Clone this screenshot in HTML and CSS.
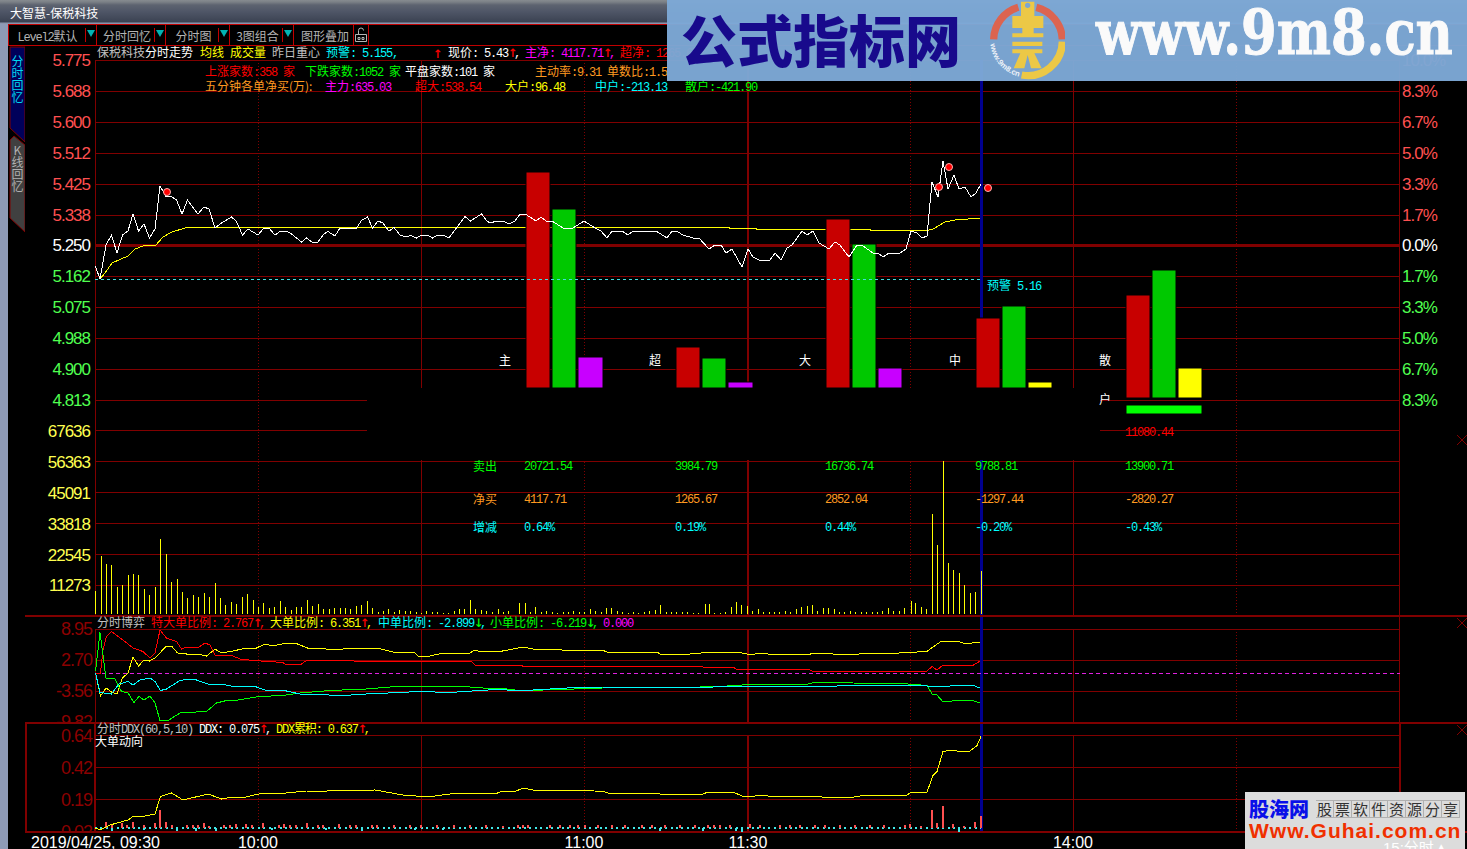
FILE: index.html
```html
<!DOCTYPE html>
<html lang="zh-CN">
<head>
    <meta charset="UTF-8">
    <title>大智慧-保税科技</title>
    <link rel="stylesheet" href="styles.css">
</head>
<body>
    <div class="titlebar">大智慧-保税科技</div>

    <div class="app">
        <div class="sidebar"></div>
        <div class="workspace">
            <div class="toolbar">
                <div class="tool tool-level"><span class="tool-label"><span class="n">Level2</span>默认</span><span class="tool-arrow"></span></div>
                <div class="tool tool-recall"><span class="tool-label">分时回忆</span><span class="tool-arrow"></span></div>
                <div class="tool tool-chart"><span class="tool-label">分时图</span><span class="tool-arrow"></span></div>
                <div class="tool tool-combo"><span class="tool-label">3图组合</span><span class="tool-arrow"></span></div>
                <div class="tool tool-overlay"><span class="tool-label">图形叠加</span></div>
                <div class="tool tool-lock">
                    <svg width="14" height="16" viewBox="0 0 14 16"><path class="lock" d="M4.5 7.5V3.5a2.5 2.5 0 0 1 5 0M1.5 7.5h11v7h-11zM4 10.5h2v2H4zM8 10.5h2v2H8z"/></svg>
                </div>
            </div>

            <!-- 主图 -->
            <div class="panel panel-main">
                <svg class="sidetabs" width="17" height="190" viewBox="8 46 17 190">
                    <polygon class="tab-on" points="10,47 25,47 25,142 10,128"/>
                    <polygon class="tab-off" points="10,140 14,136 25,145 25,232 10,218"/>
                    <text class="tab-text tab-text-on" x="17.5" y="55">分时回忆</text>
                    <text class="tab-text tab-text-off" x="17.5" y="144">K线回忆</text>
                </svg>
                <ul class="axis axis-main">
                    <li class="up">5.775</li><li class="up">5.688</li><li class="up">5.600</li><li class="up">5.512</li><li class="up">5.425</li><li class="up">5.338</li>
                    <li class="flat">5.250</li>
                    <li class="down">5.162</li><li class="down">5.075</li><li class="down">4.988</li><li class="down">4.900</li><li class="down">4.813</li>
                    <li class="vol">67636</li><li class="vol">56363</li><li class="vol">45091</li><li class="vol">33818</li><li class="vol">22545</li><li class="vol">11273</li>
                </ul>
                <svg class="plot" width="1305" height="569" viewBox="95 46 1305 569">
                    <path class="grid" d="M95 60.5H1400M95 91.5H1400M95 122.5H1400M95 153.5H1400M95 184.5H1400M95 215.5H1400M95 276.5H1400M95 307.5H1400M95 338.5H1400M95 369.5H1400M95 400.5H1400M95 430.5H1400M95 461.5H1400M95 492.5H1400M95 523.5H1400M95 554.5H1400M95 585.5H1400"/>
                    <path class="grid" d="M95.5 60V615M421.5 60V615M1073.5 60V615M1399.5 60V615"/>
                    <path class="grid-dot" d="M258.5 60V615M584.5 60V615M910.5 60V615M1236.5 60V615"/>
                    <path class="grid-mid" d="M95 245.5H1400"/>
                    <path class="grid-wide" d="M748 60V615"/>
                    <path class="cursor" d="M981.5 60V615"/>

                    <polyline class="avg" points="100,279 105,273 112,263 128,256 135,249 143,246 156,245 163,237 172,232 185,228 207,227 293,227 294,227.5 729,227.5 730,228.5 756,228.5 757,229.5 870,229.5 871,230.5 927,230.5 933,229 945,222 957,219.5 980,218.5"/>

                    <!-- 资金柱 -->
                    <g class="bars">
                        <rect class="bar-buy" x="526" y="172" width="24" height="216"/><rect class="bar-sell" x="552" y="209" width="24" height="179"/><rect class="bar-purple" x="578" y="357" width="25" height="31"/>
                        <rect class="bar-buy" x="676" y="347" width="24" height="41"/><rect class="bar-sell" x="702" y="358" width="24" height="30"/><rect class="bar-purple" x="728" y="382" width="25" height="6"/>
                        <rect class="bar-buy" x="826" y="219" width="24" height="169"/><rect class="bar-sell" x="852" y="244" width="24" height="144"/><rect class="bar-purple" x="878" y="368" width="24" height="20"/>
                        <rect class="bar-buy" x="976" y="318" width="24" height="70"/><rect class="bar-sell" x="1002" y="306" width="24" height="82"/><rect class="bar-yellow" x="1028" y="382" width="24" height="6"/>
                        <rect class="bar-buy" x="1126" y="295" width="24" height="103"/><rect class="bar-sell" x="1152" y="270" width="24" height="128"/><rect class="bar-yellow" x="1178" y="368" width="24" height="30"/>
                        <rect class="bar-net" x="1126" y="405" width="76" height="9"/>
                    </g>

                    <path class="warn-line" d="M95 279.5H981"/>
                    <polyline class="price" points="95.5,266.5 100,279 106,245 111.5,235 117,253 122.5,235 128,231 133,214 138.5,231 144,224 149.5,238 155,229 160,186 166,196.5 171.5,196.5 176.5,200 182,214 187.5,200 198,214 204,207 209,209 215,228 220,224 231.5,217 236.5,221.5 242.5,235 248,229 258,235 264,228 269,228 275,235 280.5,231 286,231 291.5,234 301.5,242 306.5,238 312,242 318,242 324,234 328,231.5 335,236 340,228 356.5,228 361.5,220.5 367.5,217 372.5,228 378,221 383,223 389,231 394,227.5 400,235 406,237 410.5,235.5 416.5,238 421.5,235 427.5,235 432.5,238 438,235 443,235 449,238 465,216.5 470.5,221 481.5,214 487,221 490,223 497,221 503,221 509,224 515,221 520,214 525,214 530,217 536,221 541,217 546,221 552,221 563,228 573,228 584,221 595,228 601,231 607,238 612,231 622,231 628,235 633,231 656,231 667,238 672,231 678,232 683,235 693,238 699,238 709,249 715,245 721,245 726,253 732,249 742,267 748,249 753,257 759,260 770,260 775,253 781,260 787,248 792,245 802,231 807,235 813,231 819,243 829,249 835,242 840,245 849,257 857,245 863,246 873,253 878,253 883,257 889,253 900,253 906,249 911,231 917,233 922,238 927,236 932,182 938,197 943,161 948,189 954,175 959,189 965,187 971,197 976,193 981,184"/>
                    <circle class="dot" cx="167" cy="192" r="3.5"/>
                    <circle class="dot" cx="949" cy="167" r="3.5"/>
                    <circle class="dot" cx="939" cy="187" r="3.5"/>
                    <circle class="dot" cx="988" cy="188" r="3.5"/>

                    <path class="vol-bars" d="M95.5 591V614M101.5 556V614M106.5 564V614M111.5 565V614M117.5 587V614M122.5 585V614M128.5 575V614M133.5 574V614M138.5 575V614M144.5 589V614M149.5 595V614M155.5 587V614M160.5 539V614M166.5 554V614M171.5 582V614M177.5 579V614M182.5 592V614M187.5 598V614M193.5 595V614M198.5 597V614M204.5 593V614M209.5 597V614M215.5 583V614M220.5 598V614M225.5 605V614M231.5 602V614M236.5 604V614M242.5 597V614M247.5 594V614M253.5 600V614M258.5 607V614M263.5 603V614M269.5 608V614M274.5 607V614M280.5 601V614M285.5 607V614M291.5 610V614M296.5 607V614M301.5 607V614M307.5 600V614M312.5 606V614M318.5 604V614M323.5 609V614M329.5 609V614M334.5 608V614M340.5 608V614M345.5 608V614M350.5 609V614M356.5 606V614M361.5 605V614M367.5 601V614M372.5 608V614M378.5 612V614M383.5 611V614M388.5 609V614M394.5 612V614M399.5 610V614M405.5 611V614M410.5 611V614M416.5 612V614M421.5 613V614M426.5 611V614M432.5 612V614M437.5 612V614M443.5 613V614M448.5 613V614M454.5 611V614M459.5 609V614M464.5 609V614M470.5 600V614M475.5 609V614M481.5 610V614M486.5 611V614M492.5 612V614M498.5 609V614M503.5 612V614M508.5 611V614M519.5 603V614M525.5 603V614M530.5 612V614M535.5 607V614M541.5 612V614M546.5 611V614M552.5 612V614M557.5 613V614M563.5 612V614M568.5 612V614M573.5 611V614M579.5 612V614M584.5 612V614M590.5 609V614M595.5 611V614M601.5 612V614M606.5 608V614M611.5 608V614M617.5 611V614M622.5 612V614M628.5 613V614M633.5 612V614M638.5 613V614M644.5 612V614M649.5 611V614M655.5 610V614M660.5 605V614M666.5 612V614M671.5 612V614M676.5 612V614M682.5 612V614M687.5 612V614M693.5 613V614M698.5 613V614M705.5 604V614M709.5 604V614M714.5 613V614M720.5 613V614M725.5 612V614M731.5 607V614M736.5 602V614M741.5 605V614M747.5 606V614M752.5 611V614M758.5 609V614M763.5 612V614M769.5 612V614M774.5 612V614M779.5 612V614M785.5 611V614M790.5 612V614M796.5 609V614M801.5 607V614M807.5 606V614M812.5 605V614M817.5 611V614M823.5 608V614M828.5 608V614M834.5 609V614M839.5 612V614M844.5 612V614M850.5 611V614M855.5 612V614M861.5 612V614M866.5 612V614M872.5 612V614M877.5 612V614M882.5 611V614M888.5 608V614M893.5 611V614M899.5 611V614M904.5 608V614M911.5 601V614M915.5 603V614M921.5 607V614M926.5 609V614M932.5 514V614M937.5 545V614M943.5 461V614M948.5 563V614M953.5 570V614M959.5 573V614M964.5 585V614M970.5 593V614M975.5 592V614M981.5 571V614"/>

                    <rect class="popup" x="367" y="388" width="733" height="72"/>

                    <text class="t white" x="499" y="365">主</text>
                    <text class="t white" x="649" y="365">超</text>
                    <text class="t white" x="799" y="365">大</text>
                    <text class="t white" x="949" y="365">中</text>
                    <text class="t white" x="1099" y="365">散</text>
                    <text class="t white" x="1099" y="404">户</text>
                    <text class="t cyan" x="987" y="290">预警<tspan class="n" dx="6">5.16</tspan></text>

                    <!-- 资金表 -->
                    <text class="n red" x="1125" y="436">11080.44</text>
                    <g class="green">
                        <text class="t" x="473" y="471">卖出</text>
                        <text class="n" x="524" y="470">20721.54</text><text class="n" x="675" y="470">3984.79</text><text class="n" x="825" y="470">16736.74</text><text class="n" x="975" y="470">9788.81</text><text class="n" x="1125" y="470">13900.71</text>
                    </g>
                    <g class="orange">
                        <text class="t" x="473" y="504">净买</text>
                        <text class="n" x="524" y="503">4117.71</text><text class="n" x="675" y="503">1265.67</text><text class="n" x="825" y="503">2852.04</text><text class="n" x="975" y="503">-1297.44</text><text class="n" x="1125" y="503">-2820.27</text>
                    </g>
                    <g class="cyan">
                        <text class="t" x="473" y="532">增减</text>
                        <text class="n" x="524" y="531">0.64%</text><text class="n" x="675" y="531">0.19%</text><text class="n" x="825" y="531">0.44%</text><text class="n" x="975" y="531">-0.20%</text><text class="n" x="1125" y="531">-0.43%</text>
                    </g>

                    <!-- 图头 -->
                    <text class="t grey" x="97" y="57">保税科技<tspan class="white">分时走势</tspan></text>
                    <text class="t yellow" x="200" y="57">均线</text>
                    <text class="t yellow" x="230" y="57">成交量</text>
                    <text class="t grey" x="272" y="57">昨日重心</text>
                    <text class="t cyan" x="326" y="57">预警<tspan class="n">: 5.155,</tspan></text>
                    <text class="a red" x="433" y="58">↑</text>
                    <text class="t white" x="448" y="57">现价<tspan class="n">: 5.43</tspan><tspan class="a red">↑</tspan><tspan class="n">,</tspan></text>
                    <text class="t magenta" x="525" y="57">主净<tspan class="n">: 4117.71</tspan><tspan class="a red">↑</tspan><tspan class="n">,</tspan></text>
                    <text class="t red" x="620" y="57">超净<tspan class="n">: 1265.67</tspan><tspan class="a">↑</tspan><tspan class="n">,</tspan></text>

                    <text class="t red" x="205" y="76">上涨家数<tspan class="n">:358</tspan></text>
                    <text class="t red" x="283" y="76">家</text>
                    <text class="t green" x="305" y="76">下跌家数<tspan class="n">:1052</tspan></text>
                    <text class="t green" x="389" y="76">家</text>
                    <text class="t white" x="405" y="76">平盘家数<tspan class="n">:101</tspan></text>
                    <text class="t white" x="483" y="76">家</text>
                    <text class="t orange" x="535" y="76">主动率<tspan class="n">:9.31</tspan></text>
                    <text class="t orange" x="607" y="76">单数比<tspan class="n">:1.5</tspan></text>

                    <text class="t orange" x="205" y="91">五分钟各单净买(万):</text>
                    <text class="t magenta" x="325" y="91">主力<tspan class="n">:635.03</tspan></text>
                    <text class="t red" x="415" y="91">超大<tspan class="n">:538.54</tspan></text>
                    <text class="t yellow" x="505" y="91">大户<tspan class="n">:96.48</tspan></text>
                    <text class="t cyan" x="595" y="91">中户<tspan class="n">:-213.13</tspan></text>
                    <text class="t green" x="685" y="91">散户<tspan class="n">:-421.90</tspan></text>
                </svg>
                <div class="side-right">
                    <ul class="axis axis-pct">
                        <li class="up">10.0%</li><li class="up">8.3%</li><li class="up">6.7%</li><li class="up">5.0%</li><li class="up">3.3%</li><li class="up">1.7%</li>
                        <li class="flat">0.0%</li>
                        <li class="down">1.7%</li><li class="down">3.3%</li><li class="down">5.0%</li><li class="down">6.7%</li><li class="down">8.3%</li>
                    </ul>
                    <svg class="close close-main" width="10" height="10" viewBox="0 0 10 10"><path d="M0 0L10 10M10 0L0 10"/></svg>
                </div>
            </div>

            <!-- 分时博弈 -->
            <div class="panel panel-sub">
                <ul class="axis axis-sub">
                    <li>8.95</li><li>2.70</li><li>-3.56</li><li>-9.82</li>
                </ul>
                <svg class="plot" width="1305" height="105" viewBox="95 617 1305 105">
                    <path class="grid" d="M95 629.5H1400M95 660.5H1400M95 691.5H1400"/>
                    <path class="grid" d="M95.5 629V722M421.5 629V722M1073.5 629V722M1399.5 617V722"/>
                    <path class="grid-dot" d="M258.5 629V722M584.5 629V722M910.5 629V722M1236.5 629V722"/>
                    <path class="grid-wide" d="M748 629V722"/>
                    <path class="cursor" d="M981.5 617V722"/>
                    <path class="zero-line" d="M95 673.5H1400"/>
                    <polyline class="line-yellow" points="95.5,673 100.5,696 106,688 111.5,692 117,694 122.5,678 128,673 133,657 138.5,666 144,660 149.5,661 155,658 166.5,646 171.5,646 177.5,653 186.5,654 198,654 206.5,656 215,649 221.5,653 233,651 246.5,648 256.5,648 265,644 273,646 286.5,643 295,643 310,649 318,648 333,650 353,648 376.5,648 393,652 415,653 418,656 430,656 443,653 470,653 475,650 480,651.5 500,651.5 513,649 523,647 533,649 560,649 562,650 602,650 608,652.5 658,652.5 660,654 690,654 707,652.5 740,652.5 747,654 755,654 762,653.5 780,655 787,654 805,654 808,655 813,653 827,653 833,654 850,655 863,653.5 882,654 908,652.5 927,651.5 933,647 941,641.5 957,641 963,643 972,643 980,642"/>
                    <polyline class="line-red" points="95.5,673 100.5,673 103,650 106.5,636.5 111.5,631.5 123,640 133,648 143,651.5 150,658 155,653 160,630 166.5,638 176.5,641.5 181.5,649 186.5,647 199,647 205,643 210,645 215,655 233,656 240,659 253,660.5 283,662.5 285,664 301.5,664 306.5,660.5 353,660.5 355,661.5 471.5,661.5 475,665 522,665 523,666.5 702,666.5 703,667 733,667 736,669 808,669 812,671 927,671 932,666.5 937,670 943,665 957,665.5 972,666 980,661"/>
                    <polyline class="line-green" points="95.5,671.5 100,632.5 106,678 115,679 121.5,691.5 128,693 134,702.5 139,696.5 144,700 150,696 155,703 160,720.5 168,720.5 180,713 185,712.5 206.5,711.5 216.5,703 226.5,700.5 238,700 256.5,697 286.5,695 300,693 330,690.5 366.5,689 396.5,686.5 463,686.5 490,688.5 507,689 523,691 543,690 560,689.5 602,688 700,687 740,685.5 747,684 808,684 812,683 848,682.5 853,683 908,684 927,685.5 932,694 937,695 943,702 957,700.5 972,700.5 980,703"/>
                    <polyline class="line-cyan" points="95.5,673 100,692.5 111.5,694 119,684 128,681.5 133,685 140,680 150,678 155,681.5 160.5,690.5 166.5,689 180,680.5 188,679 196.5,680 208,684 221.5,684 233,686.5 256.5,687 266.5,690.5 286.5,691 300,694 343,695.5 366.5,694 420,691.5 450,692.5 480,690.5 497,689.5 517,690.5 533,690 567,688 603,687 657,687 700,687.5 740,686 837,686 853,685 908,685 927,686 943,687 957,685 972,685 980,688"/>
                    <text class="t grey" x="97" y="627">分时博弈</text>
                    <text class="t red" x="151" y="627">特大单比例<tspan class="n">: 2.767</tspan><tspan class="a">↑</tspan><tspan class="n">,</tspan></text>
                    <text class="t yellow" x="270" y="627">大单比例<tspan class="n">: 6.351</tspan><tspan class="a red">↑</tspan><tspan class="n">,</tspan></text>
                    <text class="t cyan" x="378" y="627">中单比例<tspan class="n">: -2.899</tspan><tspan class="a green">↓</tspan><tspan class="n">,</tspan></text>
                    <text class="t green" x="490" y="627">小单比例<tspan class="n">: -6.219</tspan><tspan class="a">↓</tspan><tspan class="n">,</tspan></text>
                    <text class="n magenta" x="603" y="627">0.000</text>
                </svg>
                <div class="side-right">
                    <svg class="close close-sub" width="10" height="10" viewBox="0 0 10 10"><path d="M0 0L10 10M10 0L0 10"/></svg>
                </div>
            </div>

            <!-- DDX -->
            <div class="panel panel-ddx">
                <ul class="axis axis-ddx">
                    <li>0.64</li><li>0.42</li><li>0.19</li><li>-0.02</li>
                </ul>
                <svg class="plot" width="1305" height="107" viewBox="95 724 1305 107">
                    <path class="grid" d="M95 735.5H1400M95 767.5H1400M95 799.5H1400"/>
                    <path class="grid" d="M421.5 735V831M1073.5 735V831"/>
                    <path class="grid-side" d="M95 724V831M1399.5 724V831"/>
                    <path class="grid-dot" d="M258.5 735V831M584.5 735V831M910.5 735V831M1236.5 735V831"/>
                    <path class="grid-wide" d="M748 735V831"/>
                    <path class="cursor" d="M981.5 724V831"/>
                    <path class="ddx-base" d="M95 828H981"/>
                    <path class="ddx-down" d="M112 828V831M144 828V830M177 828V831M196 828V831M216 828V831M272 828V830M326 828V830M362 828V831M415 828V830M443 828V830M660 828V831M703 828V831M736 828V831M742 828V832M959 828V832"/>
                    <path class="ddx-up" d="M106 822V828M112 825V828M122 823V828M127 825V828M133 822V828M144 825V828M155 823V828M160 810V828M166 822V828M172 825V828M187 825V828M193 825V828M198 825V828M204 823V828M209 826V828M224 825V828M230 825V828M236 824V828M246 824V828M252 825V828M263 823V828M279 825V828M284 824V828M290 825V828M296 825V828M307 823V828M318 825V828M323 825V828M339 824V828M350 825V828M356 825V828M372 825V828M377 825V828M394 825V828M410 825V828M421 825V828M437 825V828M454 825V828M470 825V828M486 825V828M503 826V828M518 825V828M523 825V828M528 825V828M550 825V828M560 825V828M570 825V828M578 825V828M585 825V828M598 825V828M612 825V828M625 825V828M642 825V828M652 825V828M665 825V828M680 825V828M695 825V828M708 825V828M714 825V828M720 825V828M730 825V828M750 824V828M760 825V828M780 825V828M790 825V828M800 825V828M815 825V828M825 825V828M840 825V828M855 825V828M870 825V828M884 825V828M905 825V828M910 824V828M921 826V828M932 810V828M937 823V828M943 806V828M953 824V828M964 826V828M975 822V828M981 816V828"/>
                    <polyline class="line-yellow" points="95.5,828 100,830 110,825 128,820 133,816.5 140,817 155,814 160.5,796.5 171.5,793 183,800 208,794 221.5,799 233,797 241.5,798 263,793 276.5,794 306.5,791 326.5,791 353,790.5 375,790 403,795 423,796.5 435,796 450,794 480,793 495,794 500,792 515,791.5 523,788 533,790 577,790 603,791.5 610,793.5 657,793.5 660,794 703,794 708,792 733,792 742,796 755,796 758,795 778,797 788,796 815,796 822,797 833,797 848,798 860,796 872,795 907,795 912,792 927,792 933,775.5 937,771.5 943,751.5 953,750 959,751.5 970,751 977,745.5 981,736.5"/>
                    <text class="t grey" x="97" y="733">分时<tspan class="n">DDX(60,5,10)</tspan></text>
                    <text class="n white" x="199" y="733">DDX: 0.075<tspan class="a red">↑</tspan>,</text>
                    <text class="n yellow" x="276" y="733">DDX<tspan class="t">累积</tspan>: 0.637<tspan class="a red">↑</tspan>,</text>
                    <text class="t white" x="95" y="746">大单动向</text>
                </svg>
                <div class="side-right">
                    <svg class="close close-ddx" width="10" height="10" viewBox="0 0 10 10"><path d="M0 0L10 10M10 0L0 10"/></svg>
                </div>
            </div>

            <svg class="timeaxis" width="1459" height="16" viewBox="8 833 1459 16">
                <text x="31" y="848">2019/04/25, 09:30</text>
                <text class="mid" x="258" y="848">10:00</text>
                <text class="mid" x="584" y="848">11:00</text>
                <text class="mid" x="748" y="848">11:30</text>
                <text class="mid" x="1073" y="848">14:00</text>
            </svg>
        </div>
    </div>

    <!-- 水印 -->
    <div class="wm-top">
        <div class="wm-name">公式指标网</div>
        <svg class="wm-logo" width="80" height="81" viewBox="0 0 240 243">
            <defs><path id="logoArc" d="M16 132A112 112 0 0 0 122 232"/></defs>
            <path class="ring-red" d="M26 118A103 103 0 0 1 100 22"/>
            <path class="ring-red" d="M154 22A103 103 0 0 1 232 118"/>
            <path class="ring-yellow" d="M232 125A103 103 0 0 1 110 225"/>
            <path class="coin" fill-rule="evenodd" d="M108 5H148V48H175V84H146V100H175V112H82V100H112V84H82V48H108ZM120 16a8 8 0 1 0 16 0a8 8 0 1 0-16 0Z"/>
            <path class="coin" fill-rule="evenodd" d="M82 125H172V138H82ZM82 148H172V160H148L170 205H138L128 165L118 205H86L106 160H82Z"/>
            <text class="logo-text"><textPath href="#logoArc">www.9m8.cn</textPath></text>
        </svg>
        <div class="wm-url">www.9m8.cn</div>
    </div>

    <div class="wm-bottom">
        <div class="wm-row">
            <span class="wm-guhai">股海网</span>
            <span class="wm-cells"><span>股</span><span>票</span><span>软</span><span>件</span><span>资</span><span>源</span><span>分</span><span>享</span></span>
        </div>
        <div class="wm-site">Www.Guhai.com.cn</div>
        <div class="wm-corner">15:分时▲</div>
    </div>
</body>
</html>
```

FILE: styles.css
```css
* {
    box-sizing: border-box;
}
html, body {
    margin: 0;
    height: 100%;
    overflow: hidden;
}
body {
    background: #000;
    font-family: "Noto Sans CJK SC", sans-serif;
    color: #fff;
    width: 1467px;
    height: 849px;
    position: relative;
}
ul {
    list-style: none;
    margin: 0;
    padding: 0;
}
svg {
    display: block;
}

/* title bar */
.titlebar {
    height: 24px;
    padding: 6px 0 0 10px;
    font-size: 12px;
    line-height: 14px;
    color: #fff;
    background: linear-gradient(#868b90 0, #7b8086 2px, #5d6370 5px, #4e5566 12px, #434a5a 18px, #3a4152 22px, #8b95ad 23px);
}
.app {
    display: flex;
    height: 825px;
}
.sidebar {
    width: 8px;
    background: #8e9ab6;
}
.workspace {
    width: 1459px;
    display: flex;
    flex-direction: column;
}

/* toolbar */
.toolbar {
    display: flex;
    height: 22px;
    border-top: 1px solid #c00000;
    border-bottom: 1px solid #c00000;
    border-left: 1px solid #c00000;
    color: #b4b4b4;
    font-size: 12px;
    line-height: 22px;
}
.tool {
    display: flex;
    border-right: 1px solid #c00000;
}
.tool-level { width: 88px; }
.tool-recall { width: 69px; }
.tool-chart { width: 64px; }
.tool-combo { width: 64px; }
.tool-overlay { width: 60px; }
.tool-lock {
    width: 15px;
    align-items: center;
    justify-content: center;
}
.tool-label {
    flex: 1;
    padding-left: 3px;
    text-align: center;
    white-space: nowrap;
}
.tool-level .tool-label {
    padding-left: 1px;
}
.tool-arrow {
    width: 11px;
    height: 14px;
    margin-top: 3px;
    border-left: 1px solid #c00000;
    position: relative;
}
.tool-arrow::after {
    content: "";
    position: absolute;
    left: 1px;
    top: 2px;
    border-left: 4px solid transparent;
    border-right: 4px solid transparent;
    border-top: 7px solid #00b4b4;
}
.lock {
    fill: none;
    stroke: #b4b4b4;
    stroke-width: 1;
}

/* panels */
.panel {
    display: flex;
}
.panel-main {
    height: 569px;
}
.panel-sub {
    height: 107px;
    margin-left: 17px;
    border-top: 2px solid #800000;
}
.panel-ddx {
    height: 111px;
    margin-left: 17px;
    border-top: 2px solid #800000;
    border-bottom: 2px solid #800000;
    border-left: 2px solid #800000;
}
.plot {
    flex: none;
    overflow: visible;
}
.side-right {
    flex: 1;
    position: relative;
}

/* vertical tabs */
.sidetabs {
    flex: none;
}
.tab-on {
    fill: #00005a;
    stroke: #800000;
}
.tab-off {
    fill: #404040;
    stroke: #800000;
}
.tab-text {
    font-size: 12px;
    writing-mode: vertical-rl;
    text-orientation: upright;
    text-anchor: start;
}
.tab-text-on {
    fill: #00d8f0;
}
.tab-text-off {
    fill: #b0b0b0;
}

/* axis labels */
.axis {
    font-family: "Liberation Sans", sans-serif;
    font-size: 17px;
    letter-spacing: -1px;
}
.axis-main {
    width: 70px;
    flex: none;
    height: 569px;
    padding-right: 5px;
    text-align: right;
}
.axis-main li, .axis-pct li {
    height: 30.92px;
    line-height: 30.92px;
}
.axis-pct {
    padding-left: 2px;
}
.axis-sub, .axis-ddx {
    flex: none;
    overflow: hidden;
    padding-right: 3px;
    text-align: right;
    color: #8c0000;
    font-size: 18px;
}
.axis-sub {
    width: 70px;
    height: 108.5px;
    margin-top: -3.5px;
}
.axis-sub li {
    height: 31px;
    line-height: 31px;
}
.axis-ddx {
    width: 68px;
    height: 111px;
    margin-top: -4px;
}
.axis-ddx li {
    height: 32px;
    line-height: 32px;
}
.up { color: #ff5050; }
.flat { color: #fff; }
.down { color: #50ff50; }
.vol { color: #ffff50; }

/* chart strokes */
.grid, .grid-dot, .grid-mid, .grid-wide, .grid-side, .cursor, .vol-bars, .ddx-up, .ddx-down, .ddx-base {
    fill: none;
    shape-rendering: crispEdges;
}
polyline {
    fill: none;
    stroke-width: 1;
    shape-rendering: crispEdges;
}
.grid { stroke: #800000; stroke-width: 1; }
.grid-dot { stroke: #800000; stroke-width: 1; stroke-dasharray: 1 2; }
.grid-mid { stroke: #800000; stroke-width: 3; }
.grid-wide { stroke: #800000; stroke-width: 2; }
.grid-side { stroke: #800000; stroke-width: 2; }
.cursor { stroke: #000090; stroke-width: 3; }
.warn-line { stroke: #40e0e0; stroke-width: 1; stroke-dasharray: 3 3; fill: none; }
.zero-line { stroke: #e020e0; stroke-width: 1; stroke-dasharray: 4 3; fill: none; }
.price { stroke: #fff; }
.avg, .line-yellow { stroke: #ffff00; }
.line-red { stroke: #ff0000; }
.line-green { stroke: #00ff00; }
.line-cyan { stroke: #00ffff; }
.dot { fill: #ff0000; stroke: #ffb4b4; stroke-width: 1; }
.vol-bars { stroke: #ffff00; stroke-width: 1; }
.popup { fill: #000; }
.bars rect { stroke: #000; stroke-width: 1; }
.bar-buy { fill: #c80000; }
.bar-sell { fill: #00c800; }
.bar-purple { fill: #c800ff; }
.bar-yellow { fill: #ffff00; }
.bar-net { fill: #00ff00; }
.ddx-up { stroke: #ff5050; stroke-width: 2; }
.ddx-down { stroke: #40e8e8; stroke-width: 2; }
.ddx-base { stroke: #40e8e8; stroke-width: 2; stroke-dasharray: 2 3.43; }

/* chart text */
.t {
    font-family: "Noto Sans CJK SC", sans-serif;
    font-size: 12px;
}
.n {
    font-family: "Liberation Mono", monospace;
    font-size: 12px;
    letter-spacing: -1.2px;
}
.a {
    font-family: "DejaVu Sans Mono", monospace;
    font-size: 16px;
    letter-spacing: -3.6px;
}
.white { fill: #fff; }
.grey { fill: #c0c0c0; }
.red { fill: #ff0000; }
.green { fill: #00ff00; }
.cyan { fill: #00ffff; }
.yellow { fill: #ffff00; }
.magenta { fill: #ff00ff; }
.orange { fill: #ff9a20; }

.close {
    position: absolute;
    left: 57px;
    fill: none;
    stroke: #800000;
    stroke-width: 1;
}
.close-main { top: 389px; }
.close-sub { top: 1px; }
.close-ddx { top: 1px; }

/* time axis */
.timeaxis {
    flex: none;
    font-family: "Liberation Sans", sans-serif;
    font-size: 16px;
    fill: #fff;
}
.mid {
    text-anchor: middle;
}

/* watermarks */
.wm-top {
    position: absolute;
    left: 667px;
    top: 0;
    width: 800px;
    height: 81px;
    display: flex;
    align-items: flex-start;
    overflow: hidden;
    background: rgba(125, 168, 214, 0.97);
}
.wm-name {
    flex: none;
    width: 318px;
    padding-left: 14px;
    font-size: 56px;
    line-height: 76px;
    font-weight: 900;
    color: #180a8c;
    white-space: nowrap;
}
.wm-logo {
    flex: none;
}
.ring-red, .ring-yellow {
    fill: none;
    stroke-width: 22;
}
.ring-red { stroke: #dc6450; }
.ring-yellow { stroke: #ecc846; }
.coin { fill: #ecc846; }
.logo-text {
    font-family: "Liberation Sans", sans-serif;
    font-size: 23px;
    font-weight: 700;
    fill: #eef2f8;
}
.wm-url {
    flex: none;
    margin-left: 31px;
    font-family: "DejaVu Serif", serif;
    font-weight: 700;
    font-size: 61px;
    line-height: 66px;
    color: #fafafa;
    white-space: nowrap;
    transform: scaleX(0.84);
    transform-origin: left center;
    -webkit-text-stroke: 1px #fafafa;
}
.wm-bottom {
    position: absolute;
    left: 1245px;
    top: 792px;
    width: 220px;
    height: 57px;
    padding: 6px 3px 0 4px;
    background: #dcdcdc;
}
.wm-row {
    display: flex;
    align-items: center;
    height: 22px;
}
.wm-guhai {
    width: 67px;
    font-size: 20px;
    font-weight: 900;
    line-height: 22px;
    color: #0a10e8;
}
.wm-cells {
    display: flex;
}
.wm-cells span {
    width: 18px;
    height: 18px;
    border: 1px solid #b0b0b0;
    border-left-width: 0;
    font-size: 15px;
    line-height: 16px;
    text-align: center;
    color: #333;
}
.wm-site {
    font-family: "Liberation Sans", sans-serif;
    font-weight: 700;
    font-size: 21px;
    letter-spacing: 1px;
    line-height: 22px;
    color: #f03000;
    white-space: nowrap;
}
.wm-corner {
    position: absolute;
    left: 138px;
    top: 46px;
    font-family: "Liberation Sans", "Noto Sans CJK SC", sans-serif;
    font-size: 15px;
    line-height: 20px;
    color: #fff;
    white-space: nowrap;
}
```
